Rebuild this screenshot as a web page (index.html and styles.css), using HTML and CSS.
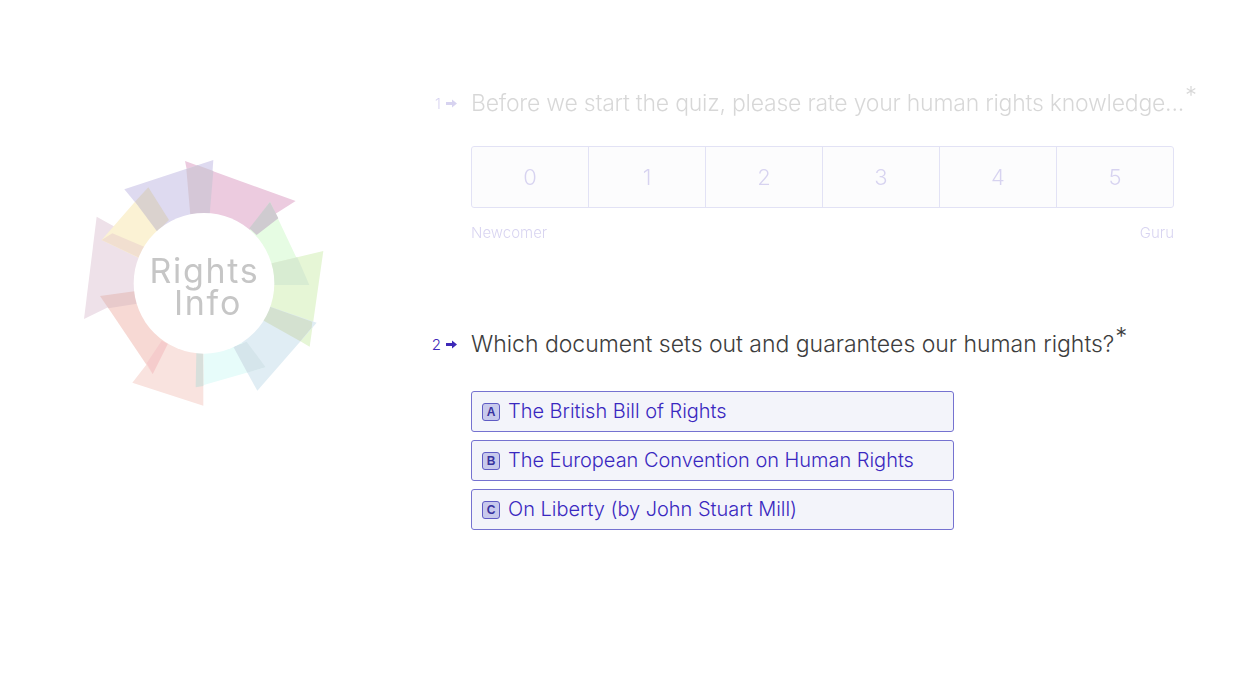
FILE: index.html
```html
<!DOCTYPE html>
<html lang="en">
<head>
<meta charset="utf-8">
<title>Human rights quiz</title>
<link rel="stylesheet" href="styles.css">
</head>
<body>
<div class="page">
  <aside class="brand">
    <svg class="logo" viewBox="0 0 270 270" role="img" aria-label="Rights Info">
      <g transform="scale(0.33333)">
        <polygon fill="#eccbdf" points="345,33 677,153 540,240 400,300"/>
        <polygon fill="#dedaf0" points="163,118 430,30 410,300 262,238"/>
        <polygon fill="#d5c7d7" points="349,57 383,46 430,63 410,300 370,300"/>
        <polygon fill="#e6fce3" points="600,155 718,405 500,405 540,240"/>
        <polygon fill="#cfcbd0" points="600,155 625,205 560,255 538,235"/>
        <polygon fill="#e6f6d6" points="760,303 719,590 500,460 500,365"/>
        <polygon fill="#d8ecd2" points="500,365 682,322 718,405 500,405"/>
        <polygon fill="#e0edf4" points="740,518 562,722 450,520 570,460"/>
        <polygon fill="#d4e1d0" points="570,460 727,515 725,533 691,574 560,500"/>
        <polygon fill="#e7fcfa" points="380,500 500,560 587,652 378,712"/>
        <polygon fill="#d5e5eb" points="490,590 530,575 587,652 532,668"/>
        <polygon fill="#f9e3df" points="310,540 400,560 400,767 187,698"/>
        <polygon fill="#d8dfdb" points="380,560 398,560 400,708 377,712"/>
        <polygon fill="#f7d9d4" points="90,437 250,420 295,578 248,672"/>
        <polygon fill="#f5cccc" points="275,572 293,582 248,672 230,640"/>
        <polygon fill="#eee1e9" points="80,200 260,300 220,420 42,507"/>
        <polygon fill="#e8cacb" points="90,438 220,420 220,458 115,475"/>
        <polygon fill="#fbf2d4" points="195,155 262,238 240,340 95,270"/>
        <polygon fill="#dad2ce" points="195,155 235,112 297,210 262,245"/>
        <polygon fill="#f1dfd0" points="127,250 240,298 230,334 95,270"/>
        <circle fill="#fff" cx="402" cy="400" r="211"/>
      </g>
      <text class="logo-text" x="134.500" y="133">Rights</text>
      <text class="logo-text" x="138" y="165">Info</text>
    </svg>
  </aside>
  <main class="quiz">
    <section class="question question-inactive">
      <div class="number">1<svg class="arrow" viewBox="0 0 11 9"><path d="M0 3h6V0.500L11 4.500 6 8.500V6H0z"/></svg></div>
      <div class="body">
        <h2 class="title title-long">Before we start the quiz, please rate your human rights knowledge...<sup class="star">*</sup></h2>
        <div class="scale">
          <div class="cell">0</div>
          <div class="cell">1</div>
          <div class="cell">2</div>
          <div class="cell">3</div>
          <div class="cell">4</div>
          <div class="cell">5</div>
        </div>
        <div class="scale-labels"><span>Newcomer</span><span>Guru</span></div>
      </div>
    </section>
    <section class="question question-active">
      <div class="number">2<svg class="arrow" viewBox="0 0 11 9"><path d="M0 3h6V0.500L11 4.500 6 8.500V6H0z"/></svg></div>
      <div class="body">
        <h2 class="title">Which document sets out and guarantees our human rights?<sup class="star">*</sup></h2>
        <div class="options">
          <div class="option"><span class="key">A</span><span class="option-label">The British Bill of Rights</span></div>
          <div class="option"><span class="key">B</span><span class="option-label">The European Convention on Human Rights</span></div>
          <div class="option"><span class="key">C</span><span class="option-label">On Liberty (by John Stuart Mill)</span></div>
        </div>
      </div>
    </section>
  </main>
</div>
</body>
</html>
```
FILE: styles.css
```css
* { box-sizing: border-box; }
html, body { margin: 0; padding: 0; background: #fff; }
body { font-family: "Inter", "Lato", sans-serif; color: #3d3d3d; }
.page { display: flex; width: 1248px; height: 690px; overflow: hidden; }
.brand { flex: 0 0 408px; padding: 150px 0 0 70px; }
.logo { display: block; width: 270px; height: 270px; filter: blur(0.5px); }
.logo-text { font-family: "Inter", sans-serif; font-size: 34px; font-weight: 400; letter-spacing: 1.7px; fill: #c6c6c6; text-anchor: middle; }
.quiz { flex: 1; padding-top: 85px; }
.question { display: flex; }
.question-inactive { opacity: 0.2; height: 241px; }
.number { flex: 0 0 49px; display: flex; justify-content: flex-end; align-items: center; gap: 5px; height: 36px; font-size: 15px; font-weight: 300; color: #3d29b8; }
.arrow { width: 11px; height: 9px; fill: #3d29b8; }
.body { margin-left: 14px; flex: 0 0 703px; min-width: 0; }
.title { margin: 0; padding-top: 1px; font-size: 23px; font-weight: 300; line-height: 34px; white-space: nowrap; letter-spacing: -0.02px; }
.title-long { letter-spacing: -0.23px; }
.star { font-size: 24px; line-height: 0; vertical-align: 7px; margin-left: 1px; }
.scale { display: flex; margin-top: 26px; height: 62px; border: 1px solid #7572d0; border-radius: 3px; background: #f3f4fa; }
.cell { flex: 1; display: flex; align-items: center; justify-content: center; font-size: 22px; font-weight: 300; color: #3d29b8; border-left: 1px solid #7572d0; }
.cell:first-child { border-left: 0; }
.scale-labels { display: flex; justify-content: space-between; margin-top: 15px; font-size: 15px; line-height: 20px; font-weight: 300; color: #3d29b8; }
.options { display: flex; flex-direction: column; gap: 8px; margin-top: 30px; width: 483px; }
.option { display: flex; align-items: center; gap: 8px; height: 41px; padding: 0 10px; border: 1px solid #7572d0; border-radius: 3px; background: #f3f4fa; font-size: 20px; font-weight: 300; color: #3a28c0; white-space: nowrap; }
.option-label { padding-bottom: 2px; letter-spacing: -0.03px; }
.key { flex: 0 0 18px; height: 18px; display: flex; align-items: center; justify-content: center; border: 1px solid #5f5bc4; border-radius: 3px; background: #c8c9ec; font-family: "Liberation Sans", sans-serif; font-size: 12px; font-weight: 700; color: #38329f; }
```
